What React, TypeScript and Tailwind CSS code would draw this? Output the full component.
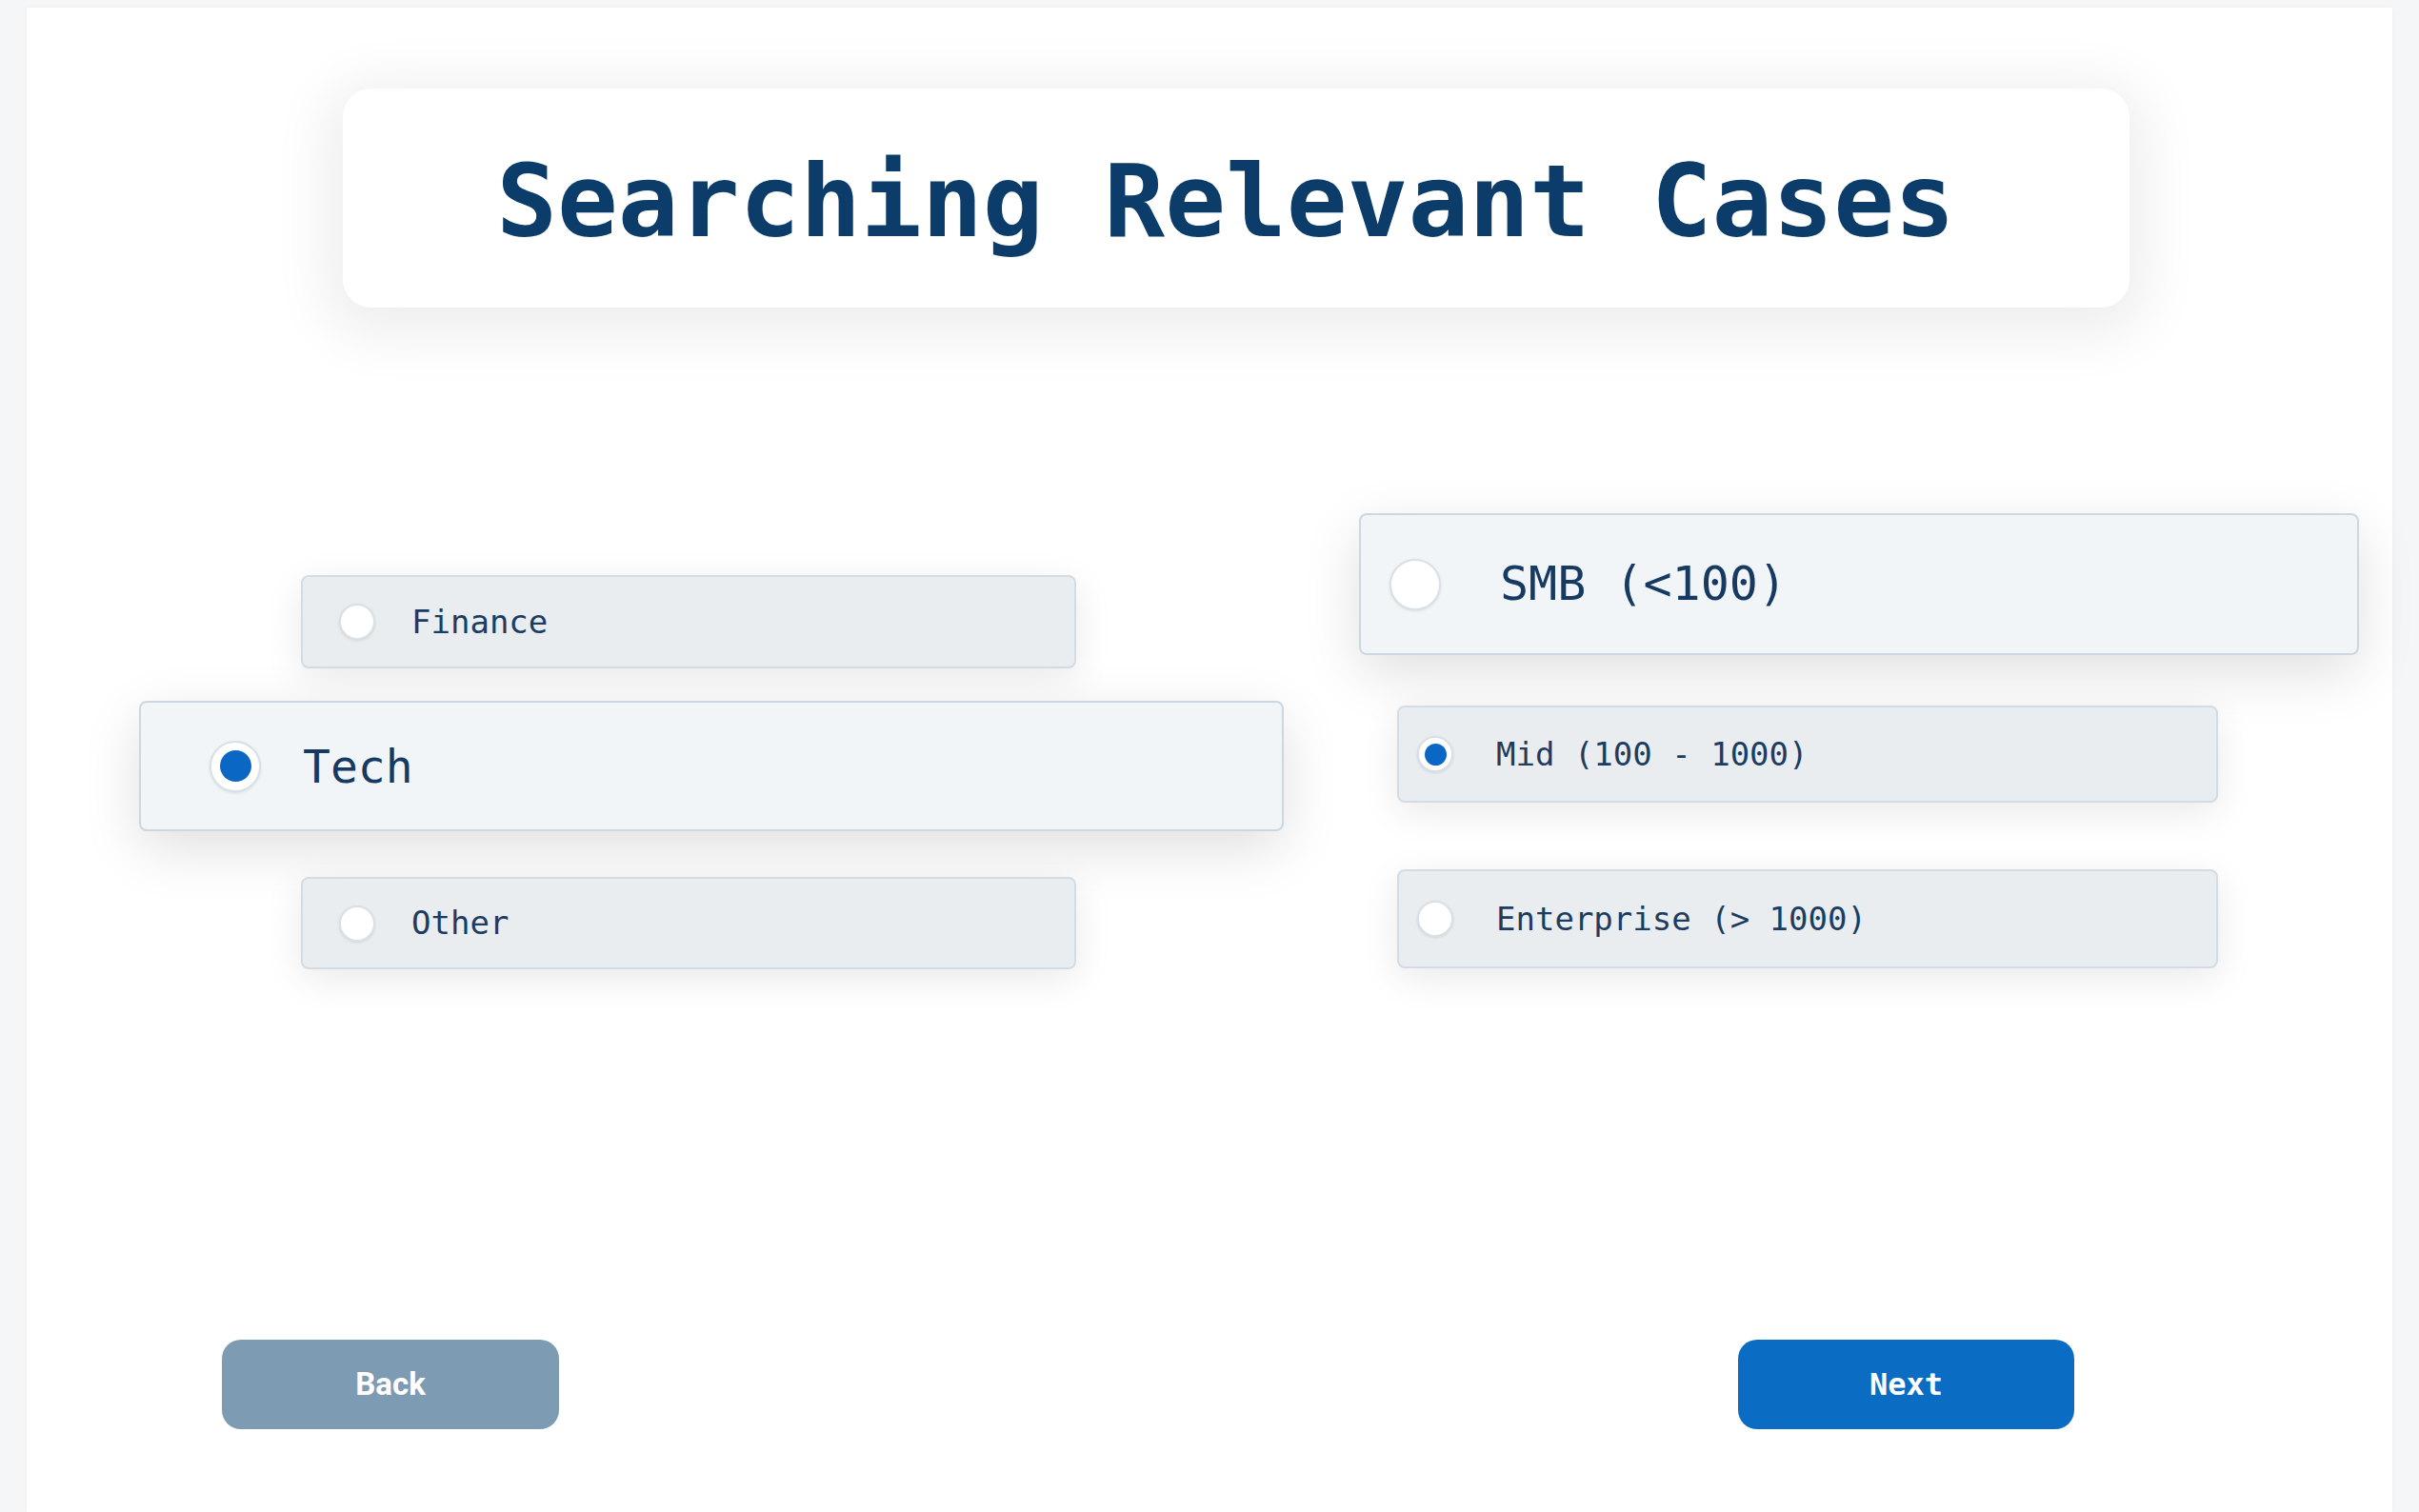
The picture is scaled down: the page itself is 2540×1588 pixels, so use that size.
import React from "react";

type Size = "sm" | "lg";

interface OptionProps {
  label: string;
  selected?: boolean;
  size: Size;
  text: string;
  className?: string;
}

const mono = { fontFamily: '"DejaVu Sans Mono", "Liberation Mono", monospace' };

function Radio({ selected, d, dot }: { selected?: boolean; d: string; dot: string }) {
  return (
    <span
      className={`flex-none ${d} rounded-full bg-white border-2 border-[#d9e0e6] shadow-[0_1px_3px_rgba(0,0,0,0.1)] flex items-center justify-center`}
    >
      {selected && <span className={`${dot} rounded-full bg-[#0a68c4]`} />}
    </span>
  );
}

function Option({ label, selected, size, text, className = "" }: OptionProps) {
  return (
    <div className={`flex items-center rounded-[8px] border-2 ${className}`} style={mono}>
      {size === "lg" ? (
        <Radio selected={selected} d="w-[54px] h-[54px]" dot="w-[33px] h-[33px]" />
      ) : (
        <Radio selected={selected} d="w-[38px] h-[38px]" dot="w-[23px] h-[23px]" />
      )}
      <span className={text}>{label}</span>
    </div>
  );
}

const small =
  "bg-[#e9edf0] border-[#d3dce3] shadow-[0_10px_40px_rgba(0,0,0,0.09)]";
const large =
  "bg-[#f1f5f7] border-[#ccd7e1] shadow-[0_18px_60px_rgba(0,0,0,0.13)]";

export default function App() {
  return (
    <div className="min-h-screen w-full bg-[#f5f6f7] overflow-hidden">
      <div className="mx-[28px] mt-[8px] h-[1580px] bg-white shadow-[0_0_6px_rgba(0,0,0,0.04)] flex flex-col">
        {/* Title */}
        <div className="ml-[332px] mt-[85px] w-[1876px] h-[230px] rounded-[30px] bg-white shadow-[0_12px_60px_18px_rgba(0,0,0,0.07)] flex items-center justify-center">
          <h1 className="text-[106px] font-bold text-[#0c3c6a] leading-none pt-[8px] pr-[22px]" style={mono}>
            Searching Relevant Cases
          </h1>
        </div>

        {/* Options */}
        <div className="flex mt-[216px]">
          <div className="ml-[118px] w-[1202px] flex flex-col pt-[65px]">
            <Option
              label="Finance"
              size="sm"
              text="text-[#1c3d61] text-[34px]"
              className={`ml-[170px] w-[814px] h-[98px] pl-[38px] gap-[38px] ${small}`}
            />
            <Option
              label="Tech"
              size="lg"
              selected
              text="text-[#163a62] text-[48px]"
              className={`mt-[34px] w-[1202px] h-[137px] pl-[72px] gap-[44px] ${large}`}
            />
            <Option
              label="Other"
              size="sm"
              text="text-[#1c3d61] text-[34px]"
              className={`mt-[48px] ml-[170px] w-[814px] h-[97px] pl-[38px] gap-[38px] ${small}`}
            />
          </div>

          <div className="ml-[79px] flex flex-col">
            <Option
              label="SMB (<100)"
              size="lg"
              text="text-[#163a62] text-[50px]"
              className={`w-[1050px] h-[149px] pl-[30px] gap-[62px] ${large}`}
            />
            <Option
              label="Mid (100 - 1000)"
              size="sm"
              selected
              text="text-[#1c3d61] text-[34px]"
              className={`mt-[53px] ml-[40px] w-[862px] h-[102px] pl-[19px] gap-[45px] ${small}`}
            />
            <Option
              label="Enterprise (> 1000)"
              size="sm"
              text="text-[#1c3d61] text-[34px]"
              className={`mt-[70px] ml-[40px] w-[862px] h-[104px] pl-[19px] gap-[45px] ${small}`}
            />
          </div>
        </div>

        {/* Buttons */}
        <div className="flex mt-[389px]">
          <button
            className="ml-[205px] w-[354px] h-[94px] rounded-[20px] bg-[#7d9bb3] text-white text-[33px] font-bold"
            style={{ fontFamily: 'Roboto, "Liberation Sans", sans-serif' }}
          >
            Back
          </button>
          <button
            className="ml-[1238px] w-[353px] h-[94px] rounded-[20px] bg-[#0a6cc2] text-white text-[32px] font-bold"
            style={mono}
          >
            Next
          </button>
        </div>
      </div>
    </div>
  );
}
